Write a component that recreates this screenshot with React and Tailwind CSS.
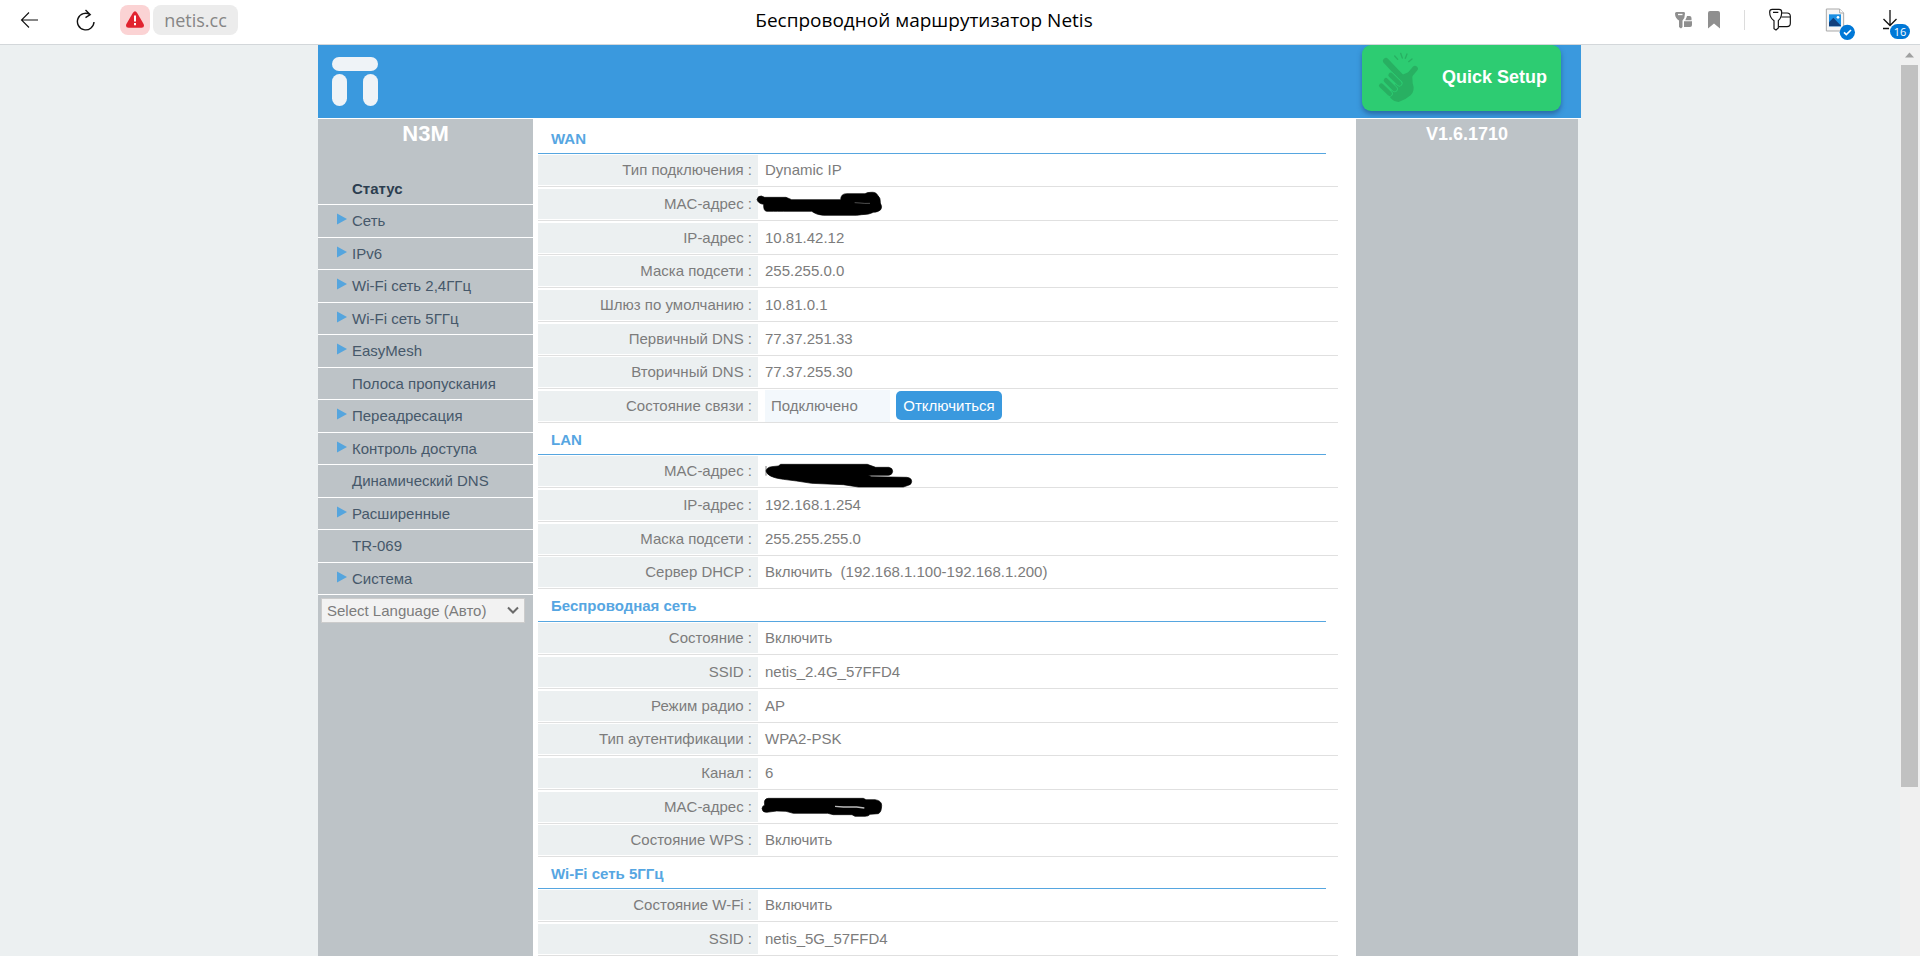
import React, { useState } from "react";

const menuItems = [
  { label: "Сеть", arrow: true },
  { label: "IPv6", arrow: true },
  { label: "Wi-Fi сеть 2,4ГГц", arrow: true },
  { label: "Wi-Fi сеть 5ГГц", arrow: true },
  { label: "EasyMesh", arrow: true },
  { label: "Полоса пропускания", arrow: false },
  { label: "Переадресация", arrow: true },
  { label: "Контроль доступа", arrow: true },
  { label: "Динамический DNS", arrow: false },
  { label: "Расширенные", arrow: true },
  { label: "TR-069", arrow: false },
  { label: "Система", arrow: true },
];

const Scribble = ({ viewBox, children }) => (
  <svg
    className="block -ml-2 w-[160px] h-8 overflow-visible"
    viewBox={viewBox}
    aria-label="скрыто"
  >
    {children}
  </svg>
);

const wanMac = (
  <Scribble viewBox="21 21 480 96">
    <path
      stroke="#000"
      strokeWidth="2"
      strokeLinejoin="round"
      d="M21 55Q24 44 34 45L44 49H108L125 56H272Q272 38 290 38H345Q352 34 362 34Q378 32 383 43Q392 50 391 66Q398 78 392 86Q386 93 370 94Q358 101 335 101L320 103H220Q200 102 185 91H100Q80 91 70 91H50Q40 90 41 70Q24 68 21 55Z"
    />
    <path d="M314 65L330 66Q344 68 360 67" stroke="#777" strokeWidth="2" fill="none" />
  </Scribble>
);

const lanMac = (
  <Scribble viewBox="81 825 480 96">
    <path d="M108 858V887" stroke="#808080" strokeWidth="3" />
    <path
      stroke="#000"
      strokeWidth="2"
      strokeLinejoin="round"
      d="M108 873Q110 862 125 860L145 858L152 853H412L437 862H476Q488 864 488 874Q487 885 476 886H415L425 890L530 892Q545 893 545 905Q544 914 535 916L520 921H385L340 914L245 910L200 903L160 898Q112 892 108 873Z"
    />
  </Scribble>
);

const wifiMac = (
  <Scribble viewBox="681 627 480 96">
    <path
      stroke="#000"
      strokeWidth="2"
      strokeLinejoin="round"
      d="M696 680Q697 672 704 669Q700 650 715 649H1000L1008 653H1035Q1055 656 1055 670Q1055 690 1045 695L1020 697Q1016 703 1005 703H975L966 698H910L893 694H790L768 688L740 687L710 691Q697 691 696 680Z"
    />
    <path d="M915 673L940 675H980L1003 678" stroke="#bbb" strokeWidth="4" fill="none" />
  </Scribble>
);

const sections = [
  {
    title: "WAN",
    rows: [
      ["Тип подключения", "Dynamic IP"],
      ["MAC-адрес", wanMac],
      ["IP-адрес", "10.81.42.12"],
      ["Маска подсети", "255.255.0.0"],
      ["Шлюз по умолчанию", "10.81.0.1"],
      ["Первичный DNS", "77.37.251.33"],
      ["Вторичный DNS", "77.37.255.30"],
      ["Состояние связи", <LinkState key="link" />],
    ],
  },
  {
    title: "LAN",
    rows: [
      ["MAC-адрес", lanMac],
      ["IP-адрес", "192.168.1.254"],
      ["Маска подсети", "255.255.255.0"],
      ["Сервер DHCP", "Включить \u00a0(192.168.1.100-192.168.1.200)"],
    ],
  },
  {
    title: "Беспроводная сеть",
    rows: [
      ["Состояние", "Включить"],
      ["SSID", "netis_2.4G_57FFD4"],
      ["Режим радио", "AP"],
      ["Тип аутентификации", "WPA2-PSK"],
      ["Канал", "6"],
      ["MAC-адрес", wifiMac],
      ["Состояние WPS", "Включить"],
    ],
  },
  {
    title: "Wi-Fi сеть 5ГГц",
    rows: [
      ["Состояние W-Fi", "Включить"],
      ["SSID", "netis_5G_57FFD4"],
    ],
  },
];

function LinkState() {
  return (
    <div className="flex items-center gap-1.5">
      <span className="flex items-center w-[125px] h-8 pl-1.5 bg-[#f3f8fc]">
        Подключено
      </span>
      <button
        type="button"
        className="h-[29px] w-[106px] rounded-[5px] bg-[#3a99de] text-white"
      >
        Отключиться
      </button>
    </div>
  );
}

const BrowserBar = () => (
  <header className="flex items-center shrink-0 h-[45px] pb-[5px] border-b border-[#d3d7da] bg-white font-['Open_Sans','Noto_Sans',sans-serif]">
    <button type="button" aria-label="Назад" className="ml-5">
      <svg width="20" height="20" viewBox="0 0 20 20" fill="none" stroke="#111" strokeWidth="1.1">
        <path d="M18 10H1.5M9 2.5L1.5 10L9 17.5" />
      </svg>
    </button>
    <button type="button" aria-label="Обновить" className="ml-9">
      <svg width="20" height="24" viewBox="0 0 20 24" fill="none" stroke="#111" strokeWidth="1.4">
        <path d="M18 14A8.3 8.3 0 1 1 14.2 6.6M9.5 2L14.2 6.6L9.5 9.6" />
      </svg>
    </button>
    <button
      type="button"
      aria-label="Не защищено"
      className="flex items-center justify-center ml-6 size-[30px] rounded-lg bg-[#fbd3d4]"
    >
      <svg width="18" height="17" viewBox="0 0 18 17">
        <path d="M6.8 2Q9-1.4 11.2 2L17.6 13Q19 16.5 15.5 16.7H2.5Q-1 16.5.4 13Z" fill="#e1232f" />
        <path d="M9 4.5V10.5M9 12V14.3" stroke="#fff" strokeWidth="2" />
      </svg>
    </button>
    <a
      href="#"
      className="flex items-center justify-center ml-[3px] w-[85px] h-[30px] rounded-lg bg-[#ececec] text-[#868686] text-lg"
    >
      netis.cc
    </a>
    <h1 className="flex-1 text-center text-[19px] text-black">
      Беспроводной маршрутизатор Netis
    </h1>
    <div className="flex items-center pl-[65px] pr-2.5">
      <button type="button" aria-label="Пароли">
        <svg width="17" height="18" viewBox="0 0 17 18" fill="#8f8f8f">
          <path d="M1.5 1H9Q10 1 10 2.5Q10 7 7.5 9.5V16L6 17.5L4 16V9.5Q0 7 0 2.5Q0 1 1.5 1Z" />
          <path d="M12 5H14.5Q16.5 5 16.5 7V9.3H10.2Q11.4 7.5 12 5ZM9 10.3H17V14Q17 16 15 16H9Z" />
          <path d="M3 3.5H7.5" stroke="#fff" strokeWidth="1.3" />
        </svg>
      </button>
      <button type="button" aria-label="В закладки" className="ml-4">
        <svg width="12" height="18" viewBox="0 0 12 18" fill="#8f8f8f">
          <path d="M2 0H10Q12 0 12 2V17.5L6 12.5L0 17.5V2Q0 0 2 0Z" />
        </svg>
      </button>
      <span className="ml-6 w-px h-5 bg-[#dcdcdc]" />
      <button type="button" aria-label="Менеджер паролей" className="ml-6">
        <svg width="22" height="24" viewBox="326 22 66 72" fill="none" stroke="#111" strokeWidth="3.5">
          <path d="M336 26H356Q364 26 364 34C364 46 361 54 354 60V82L347 88L341 84V60C332 54 328 46 328 34Q328 26 336 26ZM338 35H354" />
          <path d="M364 37H380Q390 37 390 47V68Q390 78 380 78H356M363 49H389" />
        </svg>
      </button>
      <button type="button" aria-label="Загруженный файл" className="ml-[34px]">
        <svg width="30" height="24" viewBox="495 21 90 72" className="overflow-visible">
          <path d="M499 24H539L551 36V90H499Z" fill="#f6f6f6" stroke="#a9a9a9" strokeWidth="3" />
          <path d="M539 24V36H551" fill="#fff" stroke="#a9a9a9" strokeWidth="3" />
          <path d="M507 40H543V76H507Z" fill="#1a8fe3" />
          <path d="M507 64L520 50L543 74V76H507Z" fill="#103f7c" />
          <circle cx="534" cy="49" r="4" fill="#fff" />
          <circle cx="562" cy="94" r="23" fill="#0078d7" />
          <path d="M552 94L559 101L573 87" fill="none" stroke="#fff" strokeWidth="5" />
        </svg>
      </button>
      <button
        type="button"
        aria-label="Загрузки"
        className="relative ml-[27px] w-7 h-6"
      >
        <svg width="20" height="24" viewBox="0 0 20 24" fill="none" stroke="#111" strokeWidth="1.3">
          <path d="M8 2V17M1.5 11L8 17.5L14.5 11M1 20.5H7" />
        </svg>
        <span className="absolute left-2 top-4 w-5 h-[15px] rounded-full bg-[#0078d7] text-white text-[11px] leading-[15px] text-center">
          16
        </span>
      </button>
    </div>
  </header>
);

const SnapIcon = () => (
  <svg width="45" height="55" viewBox="80 30 135 165" fill="none" stroke="#28b062" strokeLinecap="round">
    <path d="M110 63L162 118" strokeWidth="18" />
    <path d="M197 86L170 118" strokeWidth="17" />
    <path
      d="M150 108L188 92L190 130Q198 152 184 166Q168 180 148 186Q132 184 124 174L118 166L140 130Z"
      fill="#28b062"
      stroke="none"
    />
    <path d="M124 105L150 130M110 121L136 147M96 137L121 161" stroke="#2dcc72" strokeWidth="19" />
    <path d="M124 105L150 130M110 121L136 147M96 137L121 161" strokeWidth="14" />
    <path d="M136 48L145 58M154 40L159 54M173 42L168 55M188 57L178 65" strokeWidth="4" />
  </svg>
);

const Banner = () => (
  <div className="flex items-start justify-between h-[73px] bg-[#3a99de]">
    <svg className="ml-3.5 mt-3" width="46" height="50" viewBox="0 0 46 50" fill="#eff3f7" aria-label="netis">
      <rect x="0" y="0" width="46" height="14" rx="7" />
      <rect x="0" y="17" width="15" height="32" rx="7.5" />
      <rect x="31" y="17" width="15" height="32" rx="7.5" />
    </svg>
    <button
      type="button"
      className="flex items-center justify-between w-[199px] h-[66px] mr-5 pl-3.5 pr-3.5 pb-0.5 rounded-[9px] bg-[#2dcc72] shadow-[0_3px_5px_rgba(30,70,120,0.55)] text-white text-lg font-bold"
    >
      <SnapIcon />
      Quick Setup
    </button>
  </div>
);

const Sidebar = () => {
  const [language, setLanguage] = useState("auto");

  return (
    <nav className="w-[215px] shrink-0 bg-[#bdc3c7] text-[#46586a]">
      <h2 className="h-[52px] pt-px text-[22px] leading-7 font-bold text-center text-white">
        N3M
      </h2>
      <a
        href="#"
        className="flex items-center h-[34px] pl-[34px] pt-0.5 border-b border-white font-bold text-[#2c3e50]"
      >
        Статус
      </a>
      <ul>
        {menuItems.map((item) => (
          <li key={item.label} className="h-8 odd:h-[33px] border-b border-white">
            <a href="#" className="flex items-center h-full pl-[19px] gap-[5px]">
              <svg width="10" height="12" viewBox="0 0 10 12" className="mb-1">
                {item.arrow && <path d="M0 0.5L10 6L0 11.5Z" fill="#55a5de" />}
              </svg>
              {item.label}
            </a>
          </li>
        ))}
      </ul>
      <div className="relative m-[3px] w-[204px]">
        <select
          aria-label="Select Language"
          value={language}
          onChange={(e) => setLanguage(e.target.value)}
          className="block w-full h-[25px] pl-[5px] appearance-none border border-[#cccccc] bg-[#f2f2f2] text-[#7c7c7c]"
        >
          <option value="auto">Select Language (Авто)</option>
          <option value="ru">Русский</option>
          <option value="en">English</option>
        </select>
        <svg
          className="absolute right-1.5 top-2 pointer-events-none"
          width="12"
          height="9"
          viewBox="0 0 12 9"
          fill="none"
          stroke="#6a6a6a"
          strokeWidth="2"
        >
          <path d="M1 1.5L6 6.5L11 1.5" />
        </svg>
      </div>
    </nav>
  );
};

const StatusSection = ({ title, rows }) => (
  <section className="group">
    <h3 className="flex items-center h-8 group-nth-3:h-[33px] mr-3 pl-[13px] pt-0.5 border-b border-[#56a6e0] font-bold text-[#56a6e2]">
      {title}
    </h3>
    <table className="w-full border-separate border-spacing-0">
      <tbody>
        {rows.map(([label, value], index) => (
          <tr key={index} className="h-[34px] nth-[3n+1]:h-[33px]">
            <th scope="row" className="w-[220px] p-0 border-b border-[#e0e0e0] font-normal">
              <div className="flex items-center justify-end h-[30px] pr-1.5 bg-[#ecf0f1]">
                {label} :
              </div>
            </th>
            <td className="p-0 pl-[7px] border-b border-[#e0e0e0]">{value}</td>
          </tr>
        ))}
      </tbody>
    </table>
  </section>
);

const ScrollBar = () => (
  <div className="flex flex-col w-5 shrink-0 pl-px pr-0.5 bg-[#f0f0f0]" aria-hidden="true">
    <div className="flex items-center justify-center h-5 shrink-0">
      <svg width="9" height="6" viewBox="0 0 9 6">
        <path d="M0 5.5L4.5 0.5L9 5.5Z" fill="#a0a0a0" />
      </svg>
    </div>
    <div className="flex-1 min-h-0">
      <div className="h-[81%] bg-[#c1c1c1]" />
    </div>
  </div>
);

const App = () => {
  return (
    <div className="flex flex-col h-screen overflow-hidden bg-[#ecf0f1] font-['Liberation_Sans',Arial,sans-serif] text-[15px] leading-5 text-[#7c7c7c]">
      <BrowserBar />
      <div className="flex flex-1 min-h-0">
        <div className="flex-1 overflow-hidden">
          <div className="flex flex-col w-full max-w-[1264px] min-h-full mx-auto pr-px">
            <Banner />
            <div className="h-px bg-white" />
            <div className="flex flex-1">
              <Sidebar />
              <main className="flex-1 pl-[5px] pr-[18px] pt-[3px] bg-white">
                {sections.map((section) => (
                  <StatusSection key={section.title} {...section} />
                ))}
              </main>
              <aside className="w-[222px] shrink-0 mr-[3px] pt-[3px] bg-[#bdc3c7] text-lg leading-6 font-bold text-center text-white">
                V1.6.1710
              </aside>
            </div>
          </div>
        </div>
        <ScrollBar />
      </div>
    </div>
  );
};

export default App;
